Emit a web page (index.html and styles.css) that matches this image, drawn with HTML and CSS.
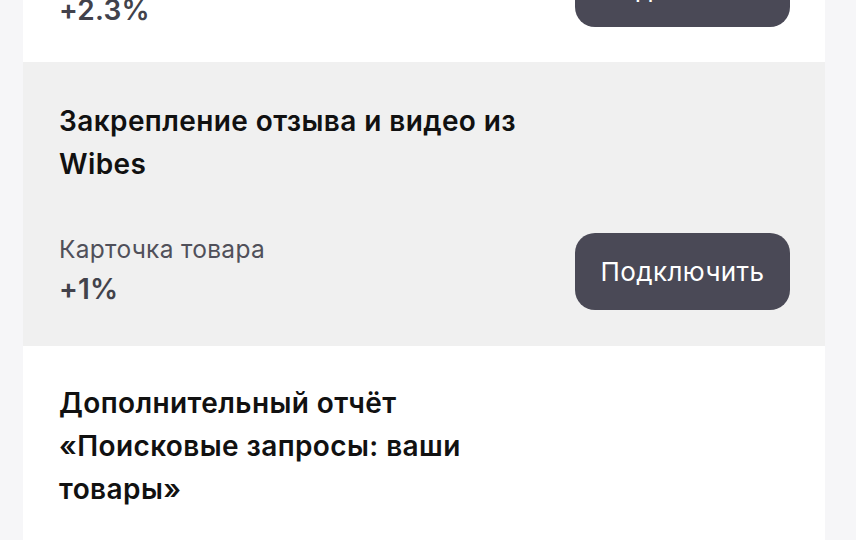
FILE: index.html
```html
<!DOCTYPE html>
<html lang="ru">
<head>
  <meta charset="UTF-8" />
  <meta name="viewport" content="width=device-width, initial-scale=1.0"/>
  <title>Платные опции</title>
  <link rel="stylesheet" href="styles.css">
</head>
<body>
  <div class="options-list">
    <div class="option option--first">
      <h3 class="option-title">Продвижение в каталоге</h3>
      <div class="option-row">
        <div class="option-stats">
          <p class="option-place">Карточка товара</p>
          <p class="option-value">+2.3%</p>
        </div>
        <button class="option-btn">Подключить</button>
      </div>
    </div>

    <div class="option option--grey">
      <h3 class="option-title">Закрепление отзыва и видео из<br>Wibes</h3>
      <div class="option-row">
        <div class="option-stats">
          <p class="option-place">Карточка товара</p>
          <p class="option-value">+1%</p>
        </div>
        <button class="option-btn">Подключить</button>
      </div>
    </div>

    <div class="option option--last">
      <h3 class="option-title">Дополнительный отчёт<br>«Поисковые запросы: ваши<br>товары»</h3>
      <div class="option-row">
        <div class="option-stats">
          <p class="option-place">Аналитика</p>
          <p class="option-value">+0.5%</p>
        </div>
        <button class="option-btn">Подключить</button>
      </div>
    </div>
  </div>
</body>
</html>
```

FILE: styles.css
```css
html, body {
  height: 100%;
  overflow: hidden;
}
body {
  font-family: Inter, "Noto Sans", sans-serif;
  background-color: #f6f6f8;
  margin: 0;
  padding: 0 31px 0 23px;
}
.options-list {
  margin-top: -176px;  /* list is scrolled, first item is mostly above the fold */
  background: white;
}
.option {
  padding: 38px 35px 35px 36px;
  background: white;
}
.option--grey {
  background-color: #f0f0f0;
}
.option--last {
  padding-top: 36px;
}
.option-title {
  margin: 0 0 45px;
  font-size: 28px;
  line-height: 43px;
  font-weight: 600;
  letter-spacing: 0.4px;
  color: #111;
}
.option-row {
  display: flex;
  align-items: center;
  justify-content: space-between;
}
.option-stats p {
  margin: 0;
}
.option--first .option-stats {
  margin-bottom: -6px;
}
.option-place {
  font-size: 24.5px;
  line-height: 36px;
  letter-spacing: 0.3px;
  color: #50505a;
}
.option-value {
  font-size: 28px;
  line-height: 44px;
  font-weight: 600;
  letter-spacing: 0.2px;
  color: #42424b;
}
.option-btn {
  width: 215px;
  height: 77px;
  border: none;
  border-radius: 20px;
  background-color: #4a4956;
  color: white;
  font-family: inherit;
  font-size: 26px;
  letter-spacing: 0.4px;
}
```
